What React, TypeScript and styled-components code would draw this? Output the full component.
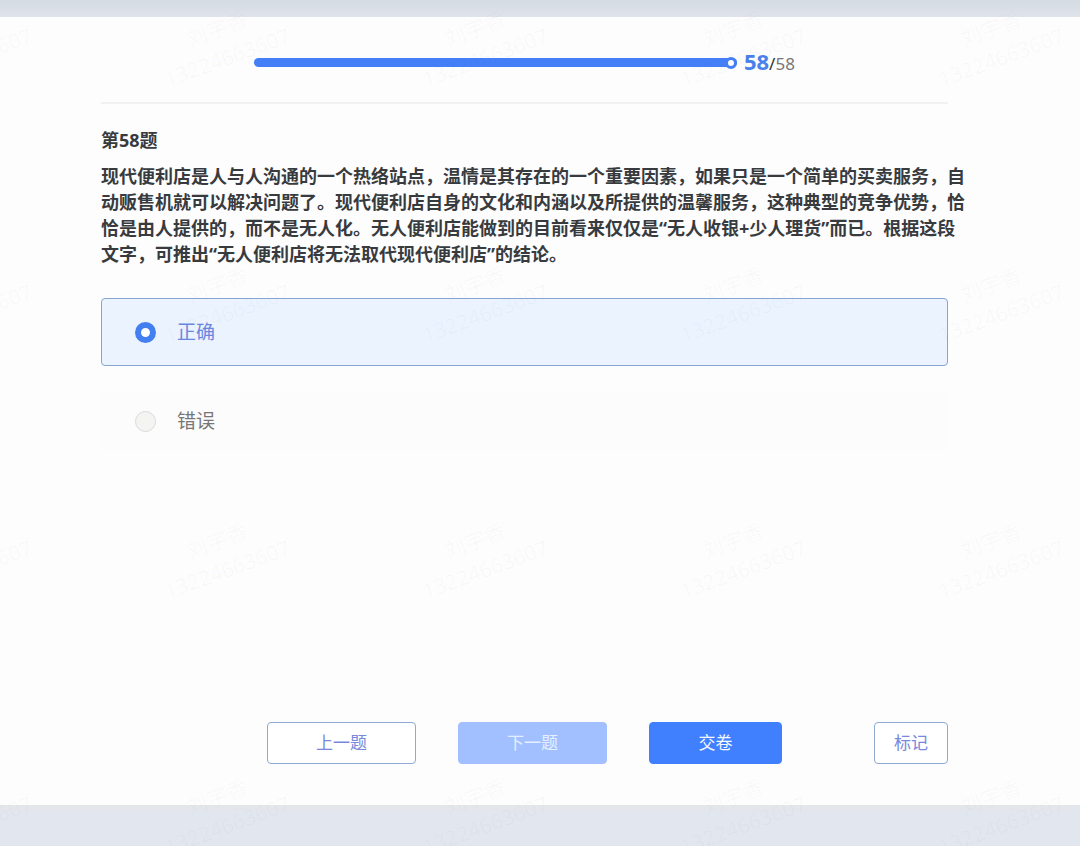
import React, { useState } from "react";
import styled, { createGlobalStyle } from "styled-components";

const GlobalStyle = createGlobalStyle`
  * { box-sizing: border-box; }
  body {
    margin: 0;
    background: #e2e6ef;
    font-family: "Noto Sans", "Noto Sans CJK SC", sans-serif;
    color: #383b3e;
  }
`;

const Page = styled.div`
  position: relative;
  display: flex;
  flex-direction: column;
  min-height: 100vh;
  overflow: hidden;
`;

const TopBand = styled.div`
  height: 17px;
  background: linear-gradient(#d5dbe3, #dfe3ea);
`;

const BottomBand = styled.div`
  height: 41px;
  background: linear-gradient(#e3e6e9, #e2e6ef 10px);
`;

const Panel = styled.main`
  flex: 1;
  display: flex;
  flex-direction: column;
  padding: 0 132px 41px 101px;
  background: #fdfdfe;
`;

const Header = styled.header`
  display: flex;
  align-items: center;
  justify-content: center;
  height: 87px;
  padding-bottom: 8px;
  padding-top: 14px;
  border-bottom: 2px solid #f0f1f2;
`;

const Track = styled.div`
  display: flex;
  align-items: center;
  justify-content: flex-end;
  width: 57%;
  height: 9px;
  margin-right: 7px;
  border-radius: 5px;
  background: #447ff8;
`;

const Handle = styled.span`
  flex: none;
  width: 12px;
  height: 12px;
  border: 3px solid #447ff8;
  border-radius: 50%;
  background: #fff;
`;

const Count = styled.div`
  font-size: 17px;
  line-height: 26px;
  color: #777;
`;

const Current = styled.strong`
  font-size: 22px;
  color: #4a80ec;
`;

const Slash = styled.span`
  color: #333;
`;

const Title = styled.h1`
  margin: 23px 0 10px;
  font-size: 18px;
  line-height: 26px;
  font-weight: 700;
`;

const Question = styled.p`
  margin: 0 0 31px;
  font-size: 18px;
  line-height: 26px;
  font-weight: 700;
  white-space: pre;
`;

const Options = styled.fieldset`
  display: flex;
  flex-direction: column;
  gap: 26px;
  margin: 0;
  padding: 0;
  border: 0;
`;

const Option = styled.label<{ $selected: boolean }>`
  display: flex;
  align-items: center;
  gap: 21px;
  height: ${(p) => (p.$selected ? 68 : 58)}px;
  padding-left: 33px;
  border: 1px solid ${(p) => (p.$selected ? "#86a5d6" : "transparent")};
  border-radius: 4px;
  background: ${(p) => (p.$selected ? "#eaf3fe" : "#fcfcfc")};
  color: ${(p) => (p.$selected ? "#6a86e0" : "#777")};
  font-size: 19px;
  line-height: 28px;
  cursor: pointer;
`;

const Radio = styled.input`
  appearance: none;
  width: 21px;
  height: 21px;
  margin: 0;
  border: 1px solid #d9dad9;
  border-radius: 50%;
  background: #f4f4f3;

  &:checked {
    border: 6px solid #447ff0;
    background: #fff;
  }
`;

const Actions = styled.footer`
  display: flex;
  align-items: center;
  gap: 42px;
  margin-top: auto;
  padding-left: 166px;
`;

const Button = styled.button<{ $kind: "outline" | "solid"; $width: number }>`
  width: ${(p) => p.$width}px;
  height: 42px;
  padding: 0;
  border: 1px solid ${(p) => (p.$kind === "solid" ? "#4080ff" : "#8ea9d4")};
  border-radius: 4px;
  background: ${(p) => (p.$kind === "solid" ? "#4080ff" : "#fff")};
  color: ${(p) => (p.$kind === "solid" ? "#f4f9ff" : "#7888dc")};
  font-family: inherit;
  font-size: 17px;
  line-height: 26px;
  cursor: pointer;

  &:disabled {
    border-color: #a2bfff;
    background: #a2bfff;
    color: #e4efff;
    cursor: default;
  }

  &:last-child {
    margin-left: auto;
  }
`;

const Watermarks = styled.div`
  position: absolute;
  inset: -85px auto auto -165px;
  display: grid;
  grid-template-columns: repeat(8, 258px);
  grid-auto-rows: 256px;
  pointer-events: none;
  user-select: none;
`;

const Mark = styled.div`
  display: flex;
  flex-direction: column;
  align-items: center;
  justify-content: center;
  transform: rotate(-20deg);
  color: rgba(70, 90, 90, 0.03);
  font-size: 21px;
  line-height: 30px;
`;

const questionText = [
  "现代便利店是人与人沟通的一个热络站点，温情是其存在的一个重要因素，如果只是一个简单的买卖服务，自",
  "动贩售机就可以解决问题了。现代便利店自身的文化和内涵以及所提供的温馨服务，这种典型的竞争优势，恰",
  "恰是由人提供的，而不是无人化。无人便利店能做到的目前看来仅仅是“无人收银+少人理货”而已。根据这段",
  "文字，可推出“无人便利店将无法取代现代便利店”的结论。",
].join("\n");

const choices = ["正确", "错误"];

export default function App() {
  const [answer, setAnswer] = useState("正确");
  return (
    <>
      <GlobalStyle />
      <Page>
        <TopBand />
        <Panel>
          <Header>
            <Track>
              <Handle />
            </Track>
            <Count>
              <Current>58</Current>
              <Slash>/</Slash>58
            </Count>
          </Header>
          <Title>第58题</Title>
          <Question>{questionText}</Question>
          <Options aria-label="第58题">
            {choices.map((c) => (
              <Option key={c} $selected={answer === c}>
                <Radio
                  type="radio"
                  name="answer"
                  value={c}
                  checked={answer === c}
                  onChange={() => setAnswer(c)}
                />
                {c}
              </Option>
            ))}
          </Options>
          <Actions>
            <Button type="button" $kind="outline" $width={149}>上一题</Button>
            <Button type="button" $kind="solid" $width={149} disabled>下一题</Button>
            <Button type="button" $kind="solid" $width={133}>交卷</Button>
            <Button type="button" $kind="outline" $width={74}>标记</Button>
          </Actions>
        </Panel>
        <BottomBand />
        <Watermarks aria-hidden="true">
          {Array.from({ length: 32 }, (_, i) => (
            <Mark key={i}>
              <span>刘宇香</span>
              <span>13224663607</span>
            </Mark>
          ))}
        </Watermarks>
      </Page>
    </>
  );
}
